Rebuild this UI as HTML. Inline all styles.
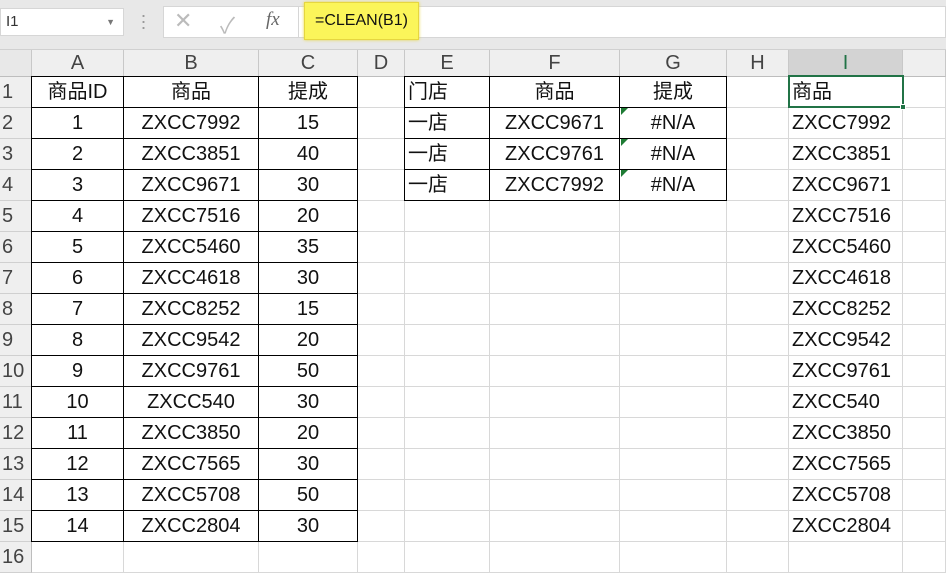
<!DOCTYPE html>
<html><head><meta charset="utf-8"><style>
*{margin:0;padding:0;box-sizing:border-box}
body{width:946px;height:564px;overflow:hidden;background:#fff;position:relative;font-family:"Liberation Sans","Noto Sans CJK SC",sans-serif;}
.a{position:absolute}
table{position:absolute;left:0;top:50px;border-collapse:separate;border-spacing:0;table-layout:fixed;width:946px}
td{box-sizing:border-box;border-right:1px solid #d8d8d8;border-bottom:1px solid #d8d8d8;font-size:20px;color:#111;white-space:nowrap;overflow:hidden;text-align:center;padding:0;line-height:28px;font-family:"Liberation Sans","Noto Sans CJK SC",sans-serif}
tr{height:31px}
tr.h{height:27px}
tr.h td{background:#efefef;color:#444;border-right:1px solid #c8c8c8;border-bottom:1px solid #bdbdbd;line-height:24px}
td.r{background:#efefef;color:#444;text-align:left;padding-left:2px;border-right:1px solid #bdbdbd;border-bottom:1px solid #d0d0d0}
td.l{text-align:left;padding-left:3px}
.v{position:absolute;width:1px;background:#000}
.tri{position:absolute;width:0;height:0;border-top:7px solid #1e7b34;border-right:7px solid transparent}
</style></head><body>
<div class="a" style="left:0;top:0;width:946px;height:50px;background:#e8e8e8;border-bottom:1px solid #d0d0d0"></div>
<div class="a" style="left:0;top:8px;width:124px;height:28px;background:#fff;border:1px solid #d6d6d6;font-size:15px;line-height:26px;padding-left:5px;color:#333">I1<span style="position:absolute;right:8px;top:0;font-size:9px;color:#777">▼</span></div>
<div class="a" style="left:142px;top:13px;width:3px;height:18px;background:radial-gradient(circle,#999 1px,transparent 1.2px) 0 0/3px 6px"></div>
<div class="a" style="left:163px;top:6px;width:783px;height:32px;background:#fff;border:1px solid #d6d6d6"></div>
<div class="a" style="left:174px;top:8px;font-size:22px;color:#bbb">✕</div>
<div class="a" style="left:220px;top:8px;font-size:22px;color:#bbb">✓</div>
<div class="a" style="left:266px;top:9px;font-size:19px;color:#666;font-style:italic;font-family:'Liberation Serif',serif">fx</div>
<div class="a" style="left:298px;top:6px;width:1px;height:32px;background:#d6d6d6"></div>
<div class="a" style="left:304px;top:2px;width:115px;height:38px;background:#fbf55a;border:1px solid #e6d640;box-shadow:0 0 3px #e6d640;font-size:16px;line-height:36px;padding-left:10px;color:#111">=CLEAN(B1)</div>
<table>
<colgroup><col style="width:32px"><col style="width:92px"><col style="width:135px"><col style="width:99px"><col style="width:47px"><col style="width:85px"><col style="width:130px"><col style="width:107px"><col style="width:62px"><col style="width:114px"><col style="width:43px"></colgroup>
<tr class="h"><td style="background:#e8e8e8"></td><td>A</td><td>B</td><td>C</td><td>D</td><td>E</td><td>F</td><td>G</td><td>H</td><td style="background:#d3d3d3;border-bottom:2px solid #217346;color:#217346">I</td><td></td></tr>
<tr><td class="r">1</td><td>商品ID</td><td>商品</td><td>提成</td><td></td><td class="l">门店</td><td>商品</td><td>提成</td><td></td><td class="l">商品</td><td></td></tr>
<tr><td class="r">2</td><td>1</td><td>ZXCC7992</td><td>15</td><td></td><td class="l">一店</td><td>ZXCC9671</td><td>#N/A</td><td></td><td class="l">ZXCC7992</td><td></td></tr>
<tr><td class="r">3</td><td>2</td><td>ZXCC3851</td><td>40</td><td></td><td class="l">一店</td><td>ZXCC9761</td><td>#N/A</td><td></td><td class="l">ZXCC3851</td><td></td></tr>
<tr><td class="r">4</td><td>3</td><td>ZXCC9671</td><td>30</td><td></td><td class="l">一店</td><td>ZXCC7992</td><td>#N/A</td><td></td><td class="l">ZXCC9671</td><td></td></tr>
<tr><td class="r">5</td><td>4</td><td>ZXCC7516</td><td>20</td><td></td><td></td><td></td><td></td><td></td><td class="l">ZXCC7516</td><td></td></tr>
<tr><td class="r">6</td><td>5</td><td>ZXCC5460</td><td>35</td><td></td><td></td><td></td><td></td><td></td><td class="l">ZXCC5460</td><td></td></tr>
<tr><td class="r">7</td><td>6</td><td>ZXCC4618</td><td>30</td><td></td><td></td><td></td><td></td><td></td><td class="l">ZXCC4618</td><td></td></tr>
<tr><td class="r">8</td><td>7</td><td>ZXCC8252</td><td>15</td><td></td><td></td><td></td><td></td><td></td><td class="l">ZXCC8252</td><td></td></tr>
<tr><td class="r">9</td><td>8</td><td>ZXCC9542</td><td>20</td><td></td><td></td><td></td><td></td><td></td><td class="l">ZXCC9542</td><td></td></tr>
<tr><td class="r">10</td><td>9</td><td>ZXCC9761</td><td>50</td><td></td><td></td><td></td><td></td><td></td><td class="l">ZXCC9761</td><td></td></tr>
<tr><td class="r">11</td><td>10</td><td>ZXCC540</td><td>30</td><td></td><td></td><td></td><td></td><td></td><td class="l">ZXCC540</td><td></td></tr>
<tr><td class="r">12</td><td>11</td><td>ZXCC3850</td><td>20</td><td></td><td></td><td></td><td></td><td></td><td class="l">ZXCC3850</td><td></td></tr>
<tr><td class="r">13</td><td>12</td><td>ZXCC7565</td><td>30</td><td></td><td></td><td></td><td></td><td></td><td class="l">ZXCC7565</td><td></td></tr>
<tr><td class="r">14</td><td>13</td><td>ZXCC5708</td><td>50</td><td></td><td></td><td></td><td></td><td></td><td class="l">ZXCC5708</td><td></td></tr>
<tr><td class="r">15</td><td>14</td><td>ZXCC2804</td><td>30</td><td></td><td></td><td></td><td></td><td></td><td class="l">ZXCC2804</td><td></td></tr>
<tr><td class="r">16</td><td></td><td></td><td></td><td></td><td></td><td></td><td></td><td></td><td></td><td></td></tr>
</table>
<!-- black borders A1:C15 -->
<div class="a" style="left:31px;top:76px;width:327px;height:466px;background:repeating-linear-gradient(to bottom,#000 0 1px,transparent 1px 31px)"></div>
<div class="v" style="left:31px;top:76px;height:466px"></div>
<div class="v" style="left:123px;top:76px;height:466px"></div>
<div class="v" style="left:258px;top:76px;height:466px"></div>
<div class="v" style="left:357px;top:76px;height:466px"></div>
<!-- E1:G4 -->
<div class="a" style="left:404px;top:76px;width:323px;height:125px;background:repeating-linear-gradient(to bottom,#000 0 1px,transparent 1px 31px)"></div>
<div class="v" style="left:404px;top:76px;height:125px"></div>
<div class="v" style="left:489px;top:76px;height:125px"></div>
<div class="v" style="left:619px;top:76px;height:125px"></div>
<div class="v" style="left:726px;top:76px;height:125px"></div>
<div class="tri" style="left:621px;top:108px"></div>
<div class="tri" style="left:621px;top:139px"></div>
<div class="tri" style="left:621px;top:170px"></div>
<!-- selection I1 -->
<div class="a" style="left:788px;top:75px;width:116px;height:33px;border:2px solid #217346"></div>
<div class="a" style="left:900px;top:104px;width:6px;height:6px;background:#217346;border:1px solid #fff"></div>
</body></html>
